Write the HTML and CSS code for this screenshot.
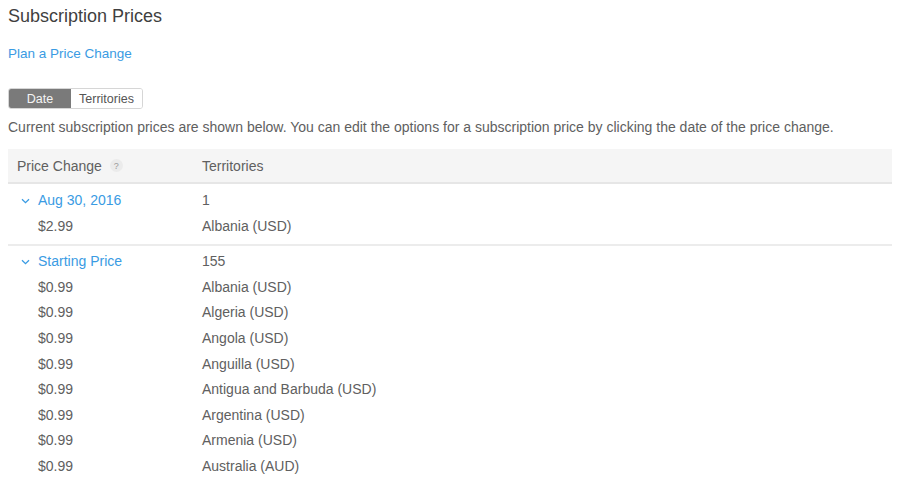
FILE: index.html
```html
<!DOCTYPE html>
<html>
<head>
<meta charset="utf-8">
<link rel="stylesheet" href="styles.css">
</head>
<body>
<div class="page">
  <h1 class="title">Subscription Prices</h1>
  <a class="plan-link">Plan a Price Change</a>
  <div class="segmented">
    <span class="seg seg-active">Date</span>
    <span class="seg">Territories</span>
  </div>
  <p class="desc">Current subscription prices are shown below. You can edit the options for a subscription price by clicking the date of the price change.</p>
  <div class="table">
    <div class="thead">
      <div class="col1">Price Change <span class="help">?</span></div>
      <div class="col2">Territories</div>
    </div>
    <div class="group">
      <div class="row">
        <div class="col1 date"><svg class="chev" width="9" height="6" viewBox="0 0 9 6"><path d="M1 1.2 L4.5 4.6 L8 1.2" fill="none" stroke="#3a9be3" stroke-width="1.3"/></svg>Aug 30, 2016</div>
        <div class="col2">1</div>
      </div>
      <div class="row"><div class="col1 price">$2.99</div><div class="col2">Albania (USD)</div></div>
    </div>
    <div class="group">
      <div class="row">
        <div class="col1 date"><svg class="chev" width="9" height="6" viewBox="0 0 9 6"><path d="M1 1.2 L4.5 4.6 L8 1.2" fill="none" stroke="#3a9be3" stroke-width="1.3"/></svg>Starting Price</div>
        <div class="col2">155</div>
      </div>
      <div class="row"><div class="col1 price">$0.99</div><div class="col2">Albania (USD)</div></div>
      <div class="row"><div class="col1 price">$0.99</div><div class="col2">Algeria (USD)</div></div>
      <div class="row"><div class="col1 price">$0.99</div><div class="col2">Angola (USD)</div></div>
      <div class="row"><div class="col1 price">$0.99</div><div class="col2">Anguilla (USD)</div></div>
      <div class="row"><div class="col1 price">$0.99</div><div class="col2">Antigua and Barbuda (USD)</div></div>
      <div class="row"><div class="col1 price">$0.99</div><div class="col2">Argentina (USD)</div></div>
      <div class="row"><div class="col1 price">$0.99</div><div class="col2">Armenia (USD)</div></div>
      <div class="row"><div class="col1 price">$0.99</div><div class="col2">Australia (AUD)</div></div>
    </div>
  </div>
</div>
</body>
</html>
```
FILE: styles.css
```css
html, body {
  margin: 0;
  padding: 0;
  background: #ffffff;
}
body {
  font-family: "Liberation Sans", Arial, sans-serif;
  font-size: 14px;
  color: #606060;
  overflow: hidden;
}
.page {
  padding: 0 8px;
}
.title {
  margin: 0;
  font-size: 18px;
  font-weight: normal;
  color: #3f3f3f;
  line-height: 32px;
}
.plan-link {
  display: block;
  margin-top: 10px;
  line-height: 24px;
  color: #3a9be3;
  font-size: 13.5px;
}
.segmented {
  display: inline-flex;
  margin-top: 22px;
  border: 1px solid #d6d6d6;
  border-radius: 3px;
  overflow: hidden;
  height: 19px;
}
.seg {
  display: flex;
  align-items: center;
  justify-content: center;
  font-size: 12.5px;
  color: #555;
  background: #fff;
  width: 71px;
}
.seg-active {
  width: 62px;
  background: #7a7a7a;
  color: #f4f4f4;
}
.desc {
  margin: 4px 0 0;
  line-height: 28px;
}
.table {
  margin-top: 8px;
  width: 884px;
}
.thead {
  display: flex;
  align-items: center;
  height: 33px;
  background: #f5f5f5;
  border-bottom: 2px solid #e6e6e6;
}
.col1 {
  width: 194px;
  padding-left: 9px;
  box-sizing: border-box;
  display: flex;
  align-items: center;
}
.col2 {
  flex: 1;
}
.help {
  display: inline-flex;
  align-items: center;
  justify-content: center;
  width: 13px;
  height: 13px;
  border-radius: 50%;
  background: #ebebeb;
  color: #9a9a9a;
  font-size: 9px;
  margin-left: 8px;
}
.group {
  padding: 4px 0 5px;
}
.group + .group {
  border-top: 2px solid #ececec;
  padding-top: 3px;
}
.row {
  display: flex;
  line-height: 25.6px;
  height: 25.6px;
}
.date {
  color: #3a9be3;
  padding-left: 13px;
}
.chev {
  margin-right: 8px;
  margin-top: 1px;
}
.price {
  padding-left: 30px;
}
```
